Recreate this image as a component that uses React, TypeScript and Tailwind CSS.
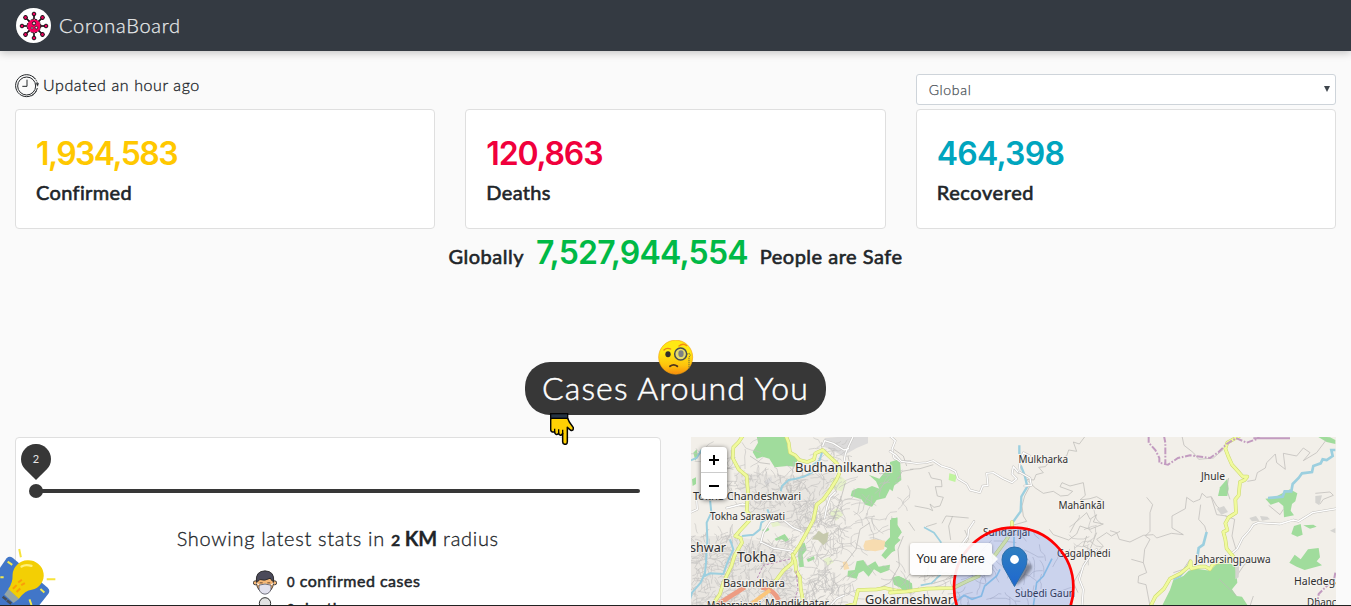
import React from "react";

const FONT = "font-[Lato,'Open_Sans',sans-serif]";

/* ---------- small drawings ---------- */

function Virus() {
  const arms = [0, 45, 90, 135, 180, 225, 270, 315];
  return (
    <svg viewBox="0 0 105 105" className="h-[35px] w-[35px]">
      <circle cx="52.5" cy="52.5" r="52.5" fill="#fff" />
      {arms.map((a) => (
        <g key={a} transform={`rotate(${a} 54 54)`}>
          <path d="M54 34V20" stroke="#1c1016" strokeWidth="5" />
          <circle cx="54" cy="18" r="5.5" fill="#f5005e" stroke="#1c1016" strokeWidth="3" />
        </g>
      ))}
      <circle cx="54" cy="54" r="20.5" fill="#f5005e" stroke="#1c1016" strokeWidth="3" strokeDasharray="7 4" />
      <circle cx="54" cy="46" r="5" fill="#ffd9e4" stroke="#1c1016" strokeWidth="3" />
      <circle cx="48" cy="60" r="3" fill="#fff" stroke="#1c1016" strokeWidth="2" />
      <circle cx="61" cy="59" r="4" fill="#ffd9e4" stroke="#1c1016" strokeWidth="2.5" />
    </svg>
  );
}

function Clock() {
  return (
    <svg viewBox="0 0 72 72" className="h-6 w-6" fill="none" stroke="#25282b">
      <path d="M61 15A33 33 0 1 0 67 42" strokeWidth="3" />
      <path d="M55 9A33 33 0 0 1 67 28M64 50A33 33 0 0 1 50 66" strokeWidth="3" strokeDasharray="4 2" />
      <circle cx="35" cy="36" r="27" strokeWidth="3" />
      <path d="M36 17V37H22" strokeWidth="3" />
      <path d="M63 28l8 0l-3 9z" fill="#25282b" strokeWidth="1" />
    </svg>
  );
}

function Monocle() {
  return (
    <svg viewBox="0 0 108 105" className="h-[35px] w-9">
      <defs>
        <linearGradient id="face" x1="0" y1="0" x2="0" y2="1">
          <stop offset="0.35" stopColor="#ffe913" />
          <stop offset="0.75" stopColor="#fdc20c" />
          <stop offset="1" stopColor="#f78c0e" />
        </linearGradient>
      </defs>
      <circle cx="53" cy="51.5" r="51" fill="url(#face)" stroke="#f5a30b" strokeWidth="2" />
      <path d="M18 30Q26 22 38 27" fill="none" stroke="#e8811c" strokeWidth="4" strokeLinecap="round" />
      <path d="M63 18Q75 8 86 17" fill="none" stroke="#f58a12" strokeWidth="4" strokeLinecap="round" />
      <ellipse cx="30" cy="43" rx="8" ry="9" fill="#31302b" />
      <circle cx="68" cy="42" r="18" fill="#e5dc6c" stroke="#474c50" strokeWidth="4.5" />
      <ellipse cx="69" cy="41" rx="8" ry="10" fill="#7d8184" />
      <path d="M86 43l8-3 3 6-4 5v35" fill="none" stroke="#6a6a42" strokeWidth="3" strokeDasharray="4 2" />
      <path d="M36 79Q47 70 58 79" fill="none" stroke="#50351c" strokeWidth="5.5" strokeLinecap="round" />
    </svg>
  );
}

function Hand() {
  return (
    <svg viewBox="0 0 72 96" className="h-8 w-6">
      <path
        d="M4 16H53L58 27L70 44Q70 56 61 51L52 43V86Q52 94 46 94Q38 94 38 86V61Q35 68 30 66Q26 65 26 60Q23 66 18 64Q14 62 14 57Q2 59 2 49V19Z"
        fill="#ffd104" stroke="#050505" strokeWidth="4.5" strokeLinejoin="round"
      />
      <path d="M14 47V58M26 49V61M38 50V64" stroke="#050505" strokeWidth="4" />
      <rect x="2" y="2" width="51" height="14" fill="#263443" stroke="#050505" strokeWidth="4" />
    </svg>
  );
}

function MaskFace() {
  return (
    <svg viewBox="0 0 72 74" className="h-[25px] w-6">
      <circle cx="7" cy="38" r="6" fill="#f6b877" stroke="#272525" strokeWidth="2.5" />
      <circle cx="65" cy="38" r="6" fill="#f6b877" stroke="#272525" strokeWidth="2.5" />
      <path d="M11 25H61V44Q58 62 36 70Q14 62 11 44Z" fill="#f6b877" stroke="#272525" strokeWidth="2.5" />
      <path d="M10 34Q7 3 36 2Q65 3 62 34L56 31L52 24Q35 34 20 28L16 33Z" fill="#4b4a5a" stroke="#272525" strokeWidth="2.5" />
      <path d="M20 38h9M43 38h9" stroke="#6e4c38" strokeWidth="3" />
      <path d="M10 39L19 45Q36 38 53 45L62 39" fill="none" stroke="#fff" strokeWidth="3" />
      <path d="M18 45Q36 38 54 45V57Q50 71 36 72Q22 71 18 57Z" fill="#e2e1ee" stroke="#343440" strokeWidth="2" />
    </svg>
  );
}

function Skull() {
  return (
    <svg viewBox="0 0 72 72" className="h-6 w-6">
      <circle cx="36" cy="19" r="17" fill="#e2e2e2" stroke="#303030" strokeWidth="3" />
    </svg>
  );
}

function Bulb() {
  return (
    <svg viewBox="0 350 170 175" className="h-[58px] w-[57px]">
      <path d="M-10 425L19 384Q27 376 38 383L142 472Q152 481 145 491L118 525H-10Z" fill="#4176c8" />
      <path d="M22 394L36 404M121 477L133 487M88 508L94 525M0 441H10" stroke="#f2e94e" strokeWidth="6" />
      <path d="M57 356L62 381M140 447H166" stroke="#f7e33a" strokeWidth="6" />
      <path d="M25 476L57 506L40 519L12 493Z" fill="#95a5a5" />
      <path d="M7 500L19 509M20 511L33 521" stroke="#444c59" strokeWidth="8" />
      <path d="M24 477Q38 458 37 433A47 45 0 1 1 95 479Q75 481 56 506Z" fill="#f3cf04" />
      <path d="M64 409Q76 401 94 407" fill="none" stroke="#fff07a" strokeWidth="7" strokeLinecap="round" />
      <path d="M38 476L49 465M49 486L60 475M54 457L65 449M63 465L74 459" stroke="#fb9d0a" strokeWidth="6" />
    </svg>
  );
}

/* ---------- map ---------- */

function rng(seed: number) {
  let s = seed;
  return () => {
    s = (s * 1664525 + 1013904223) % 4294967296;
    return s / 4294967296;
  };
}

type Area = [number, number, number, number, number, number];

function streets(seed: number, areas: Area[]) {
  const r = rng(seed);
  let d = "";
  for (const [x, y, w, h, n, len] of areas) {
    for (let i = 0; i < n; i++) {
      let px = x + r() * w;
      let py = y + r() * h;
      let a = -0.35 + Math.floor(r() * 4) * (Math.PI / 2) + (r() - 0.5) * 0.5;
      d += `M${px.toFixed(0)} ${py.toFixed(0)}`;
      for (let k = 0; k < 4; k++) {
        a += (r() - 0.5) * 1.1;
        px += Math.cos(a) * len * (0.4 + r());
        py += Math.sin(a) * len * (0.4 + r());
        d += `L${px.toFixed(0)} ${py.toFixed(0)}`;
      }
    }
  }
  return d;
}

const leftStreets = streets(11, [
  [125, 110, 190, 120, 110, 9],
  [300, 100, 140, 180, 100, 10],
  [0, 290, 130, 220, 150, 8],
  [110, 310, 190, 200, 220, 8],
  [300, 200, 160, 300, 140, 12],
  [440, 100, 200, 170, 26, 16],
  [460, 270, 130, 120, 16, 16],
  [340, 430, 160, 80, 50, 9],
  [20, 10, 170, 100, 16, 16],
  [380, 20, 80, 60, 20, 8],
]);
const midStreets = streets(5, [
  [10, 400, 200, 100, 26, 14],
  [220, 300, 300, 200, 44, 15],
  [530, 230, 110, 110, 12, 14],
]);

type Label = [string, number, number, number, number];

const labels: Label[] = [
  ["Budhanilkantha", 795, 472, 97, 13],
  ["Tokha Chandeshwari", 693, 500, 108, 11],
  ["Tokha Saraswati", 710, 519.5, 75, 10],
  ["shwar", 690, 551.5, 36, 13],
  ["Tokha", 737, 562, 39, 14],
  ["Basundhara", 723, 587, 62, 11],
  ["Mandikhatar", 765, 606.5, 64, 11],
  ["Maharajganj", 707, 609, 54, 10.5],
  ["Gokarneshwar", 865, 603.5, 88, 13],
  ["Mulkharka", 1018.5, 462.5, 49.5, 10.5],
  ["Mahānkāl", 1058.5, 508.5, 46, 10.5],
  ["Sundarijal", 983, 535.5, 47, 10.5],
  ["Gagalphedi", 1057, 556.5, 53.5, 10.5],
  ["Subedi Gaun", 1015, 596.5, 60, 10.5],
  ["Jhule", 1201, 479.5, 24, 10.5],
  ["Jaharsingpauwa", 1195, 562.5, 75.5, 10.5],
  ["Haledegaun", 1294, 584.5, 60, 10.5],
  ["Dhancha", 1307, 605.5, 41, 10.5],
];

function Road({ d, w = 8, c = "#f0fa9c", e = "#c9d66c" }: { d: string; w?: number; c?: string; e?: string }) {
  return (
    <g fill="none" strokeLinejoin="round" strokeLinecap="round">
      <path d={d} stroke={e} strokeWidth={w + 3} />
      <path d={d} stroke={c} strokeWidth={w} />
    </g>
  );
}

function MapDrawing() {
  const white = { c: "#ffffff", e: "#c2c0bd", w: 4 };
  return (
    <svg viewBox="691 437 645 169" className="block h-[169px] w-[645px]">
      <rect x="691" y="437" width="645" height="169" fill="#f2efe9" />

      <g transform="translate(690 436) scale(.33333)">
        <path d="M0 300H130L290 330L330 510H0ZM130 110L310 120L440 110L340 290L180 240Z" fill="#e9e6e1" />
        <g fill="#a0dc9c">
          <path d="M200 0H288L294 42L324 70L314 92L292 90L254 94L238 68L218 62L200 68L188 48L204 20Z" />
          <path d="M630 68L634 132L600 158L586 186L560 192L546 212L526 206L514 190L482 180L486 164L504 156L528 158L546 150L568 158L558 136L536 116L568 128L584 108L612 104Z" />
          <path d="M604 246L622 246V278L636 288L618 314L612 342L586 370L574 358L592 336L576 328L600 304Z" />
          <path d="M328 324L344 320L350 342L338 356L342 392L328 394L324 360Z" />
          <path d="M500 376L520 372L532 390L556 376L566 392L600 386L598 402L572 412L552 400L536 422L520 404L506 412L500 428L472 422L474 404L494 402Z" />
          <path d="M606 426L626 420L660 436V466L634 456L612 446Z" />
          <path d="M216 282l18-8 4 8-16 8zM254 308l30-14 14 18-12 6-10-8-18 4zM350 370l22-10 2 10-20 8zM10 50l10-10 4 20-8 14zM6 130l12-6v20l-10 6z" />
        </g>
        <path d="M404 6L480 0H534V22L500 36L458 60L430 44L402 32ZM222 138L244 120L246 132L230 150Z" fill="#dcdbdb" />
        <path d="M420 130l30-12 20 18-14 30-26-6zM416 230l26-14 18 20-22 18zM240 256l22-4 10 16-24 6zM400 370l18-8 14 16-20 12z" fill="#e6f1cb" />
        <path d={leftStreets} fill="none" stroke="#c3c1bf" strokeWidth="1.8" />
        <path d="M526 314L550 310L586 314L582 340L556 346L524 342L520 330ZM458 378L470 376L478 398L462 402Z" fill="#f7dcb0" />
        <path d="M386 284L400 294L416 288L412 316L400 328L384 312L366 310Z" fill="#c6c9ad" />
        <path
          d="M590 80L586 110L570 114L548 90L510 104L480 88L474 60M540 260L510 280L498 340L452 400M640 300L624 340L628 390L600 440L560 460M650 90L640 60L612 40M466 140L452 190L430 250M60 120L90 90L130 100M180 60L210 80L240 84"
          fill="none" stroke="#b5b3b1" strokeWidth="2"
        />
        <g fill="none" stroke="#9ccfdf" strokeWidth="6">
          <path d="M396 50L388 74L370 86L366 110L342 122L318 128L296 132L276 150L272 166" />
          <path d="M60 190L64 230L50 260L52 310L48 380L44 420L60 412L100 414L112 380L130 340L120 310" />
          <path d="M156 300L190 296L210 280L214 260L240 240L232 220" />
          <path d="M0 74L20 66L36 40M44 412L32 440L6 470L0 490" />
        </g>
        <Road d="M490 0L476 30L466 54L462 76M398 30L404 14L430 22L462 42L476 38" {...white} />
        <Road d="M600 0L616 14L606 40L612 66L632 78L660 76M436 168L420 184L410 214L404 246M110 216L158 204L174 208" {...white} />
        <Road d="M212 320L220 290L240 258L278 250L308 274L336 286M212 318L250 336L310 346M0 230L22 220L20 190M420 510L440 488L462 478" {...white} />
        <Road d="M158 0L146 18L130 34L128 66L146 100L170 120L174 170L170 226L184 240L176 256L148 286L136 300L152 306L156 320L134 358L124 390L100 440L90 474L72 500" />
        <Road d="M288 0L296 20L300 50L316 58L328 72L352 78L372 70L376 52L398 42L412 56L432 74L442 84L448 112L440 130L420 162L400 190L380 206L370 252L352 286L330 326L310 356L308 380L280 404L262 428L234 462" />
        <Road d="M308 356L316 376L318 404L330 424L332 456L338 490V510" />
        <Road d="M470 510L494 504L504 462L560 460L584 456L620 464L660 466" />
        <path d="M60 520L164 454M214 454Q250 460 266 492" fill="none" stroke="#ed9c83" strokeWidth="14" />
        <path d="M176 510L240 462" fill="none" stroke="#fac67c" strokeWidth="12" />
        <path d="M202 426L220 388L304 368M318 404L324 460L312 500" fill="none" stroke="#b98cb4" strokeWidth="3" strokeDasharray="8 5" />
      </g>

      <g transform="translate(890 436) scale(.33333)">
        <path d="M0 78L20 72L30 82L28 112L16 134L8 166L0 160ZM0 252L22 244V266L34 286L16 300L32 312L12 330L16 344L0 350ZM8 424L26 420L66 442L68 464L40 466Z" fill="#a0dc9c" />
        <path d="M178 112L200 118L196 138L176 132Z" fill="#c0f49e" />
        <path d={midStreets} fill="none" stroke="#c0bebc" strokeWidth="1.8" />
        <g fill="none" stroke="#bcbab7" strokeWidth="2.2">
          <path d="M586 0L568 24L550 18L560 46L536 42L530 60L480 74L466 92L446 94L460 110L438 116L432 132L410 130L436 156L460 172L490 166L512 180L534 178L548 166L510 152L516 140L540 150L580 140L586 178L570 192L600 188L620 182L640 194" />
          <path d="M116 108L124 126L154 132L156 152L136 152L142 180L160 184L150 210L132 214L120 204L128 224L116 218L74 210M60 100L90 98L130 86M22 134L36 106L70 100M420 150L404 180L396 210L400 240L410 256L360 270L350 300" />
          <path d="M56 258L74 284M108 272L140 262M156 262L168 240L236 246M188 240L176 270L182 312M224 282L236 310L220 332M112 420L120 360L96 344M124 444L190 424" />
          <path d="M540 290L556 260L590 230L600 250L620 236L610 258L640 264L600 280L570 270L560 294L536 312L490 296L478 280M690 286L664 300L650 290L620 310L640 330L620 350L580 330L590 300M620 290L580 390L550 440L564 470" />
        </g>
        <g fill="none" stroke="#9ccfdf" strokeWidth="7">
          <path d="M388 28V54M392 88L404 118L412 152L394 182L392 226L366 262" />
          <path d="M102 274L132 290L154 320M92 448L124 442L152 416M180 510L222 478L246 490L274 480L284 450L320 420L330 400M430 510L440 440L460 420L486 368M372 300V350" strokeWidth="5" />
        </g>
        <Road d="M0 46L18 58L34 76L80 82L110 80L130 74L154 90L180 98L196 106L204 128L230 144L240 162L270 170L278 150L294 148L290 112L310 110L340 128L366 140L380 128L366 114L370 92L386 110L390 80L400 50L420 60" {...white} />
        <Road d="M388 108L420 126L424 148L404 150M252 256L236 280L234 300L212 330M620 340L600 360L580 390L568 430L580 460L576 510" {...white} />
        <Road d="M0 470L50 466L110 458L190 456L230 436L266 420M310 364L350 310L366 284V258" w={8} />
      </g>

      <g transform="translate(1110 436) scale(.33333)">
        <g fill="#a0dc9c">
          <path d="M236 404L260 398L300 404L324 380H356L376 390L382 440L366 460L380 480L396 482L414 510H156L180 462L190 432L220 420Z" />
          <path d="M352 128L356 158L352 180H324L330 154Z" />
          <path d="M490 186L540 160L562 172L556 196L546 204L542 224L552 238L522 244L520 210L506 198L482 206L466 188Z" />
          <path d="M552 270L572 264L578 296L562 302L544 294ZM580 268L610 266L620 272L600 278ZM594 340L626 336L630 364L620 376L636 388L584 402L560 392L538 380L554 356L572 370ZM620 0L660 4L676 12V24L650 18Z" />
        </g>
        <g fill="none" stroke="#bdbbb8" strokeWidth="2.2">
          <path d="M110 184L128 206L120 230V286L106 300L120 310L104 340L100 380L110 410L86 420L84 440L108 446L120 510M0 284L20 290L28 310L60 318L100 298L130 296L140 306L184 292L220 296L186 276L186 240L226 218L230 184L250 198L270 190L276 172L290 184L304 182L320 210L344 230M304 184L320 236L350 240M272 206L266 250L284 270L290 290M356 126L350 160L360 190M346 240L374 250L366 300L378 340" />
          <path d="M412 136L436 132L442 110L466 96L470 80L496 54L500 80L526 100L520 52L560 60L580 36L600 50L580 74L620 50L650 10M476 208L510 236L520 220M216 0L222 28L250 50L266 70L310 66L340 40M240 370L220 400L190 410M100 380L64 370M420 370L400 390L380 420M328 430L380 480M430 480L420 510M616 172L660 168L670 178L640 190L630 204" />
        </g>
        <path d="M418 246l20-6 10 14-22 2zM450 240l22 2 8 8-24 4zM616 180l20-2-8 30-12-8zM320 218l22-8 12 18-20 8zM660 284l16-8v16zM376 384l12-4-2 44-10 6z" fill="#d5d4d1" />
        <path d="M676 42H664L668 60L650 72L638 70L632 82L610 90L606 108L576 112L566 126L548 144L544 166L524 166L518 182L474 186M290 288L280 326L266 336L262 366M236 388L210 420L190 430" fill="none" stroke="#9ccfdf" strokeWidth="8" />
        <Road d="M366 352L382 338L398 306L418 284L430 266L444 260L510 264L550 252L566 256L608 230L680 218" {...white} />
        <Road d="M388 0L352 20L346 38L356 64L366 86L384 106L398 122H412L404 132L390 138L386 178L376 190L378 230L356 244L346 262L352 282L340 288L346 310L350 338L370 362L360 374L320 380L308 386L300 400L286 392L270 392L244 398L242 376L236 392L212 412L180 428L162 458L136 482L122 510" />
        <path d="M116 0V20L136 42L148 66V80L174 86L204 66L240 58L300 66L326 48L350 24L378 6L410 20L438 10L450 0M162 0L166 20V84M676 410L672 432L646 454L626 474L620 510" fill="none" stroke="#c29bc0" strokeWidth="6" strokeDasharray="20 5 5 5" />
        <path d="M430 7H540" stroke="#c29bc0" strokeWidth="6" />
      </g>

      <g className="font-['Noto_Sans',sans-serif]" fill="#303030" stroke="#f7f5f1" strokeWidth="2.2" strokeOpacity=".8" style={{ paintOrder: "stroke" }}>
        {labels.map(([t, x, y, w, s]) => (
          <text key={t} x={x} y={y} fontSize={s} textLength={w} lengthAdjust="spacingAndGlyphs">
            {t}
          </text>
        ))}
      </g>

      <circle cx="1013.7" cy="587.3" r="59.7" fill="#3364ff" fillOpacity=".2" stroke="#ff0000" strokeWidth="2.7" />

      <defs>
        <linearGradient id="pin" x1="0" y1="0" x2="0" y2="1">
          <stop offset="0" stopColor="#2f7fc0" />
          <stop offset="1" stopColor="#1e67cf" />
        </linearGradient>
        <filter id="soft"><feGaussianBlur stdDeviation="1.5" /></filter>
      </defs>
      <path d="M1015 585L1022 568Q1028 560 1032 566Q1031 573 1018 584Z" fill="#000" opacity=".38" filter="url(#soft)" />
      <path d="M1014.5 586.5L1004 568Q1002 564 1002 559.5A12.5 12.5 0 0 1 1027 559.5Q1027 564 1025 568Z" fill="url(#pin)" stroke="#2a6ca9" strokeWidth="1" />
      <circle cx="1014.5" cy="559.5" r="4.4" fill="#fff" />
    </svg>
  );
}

/* ---------- page ---------- */

const stats = [
  { value: "1,934,583", label: "Confirmed", color: "text-[#ffc800]", num: "tracking-[-1.6px]", lab: "tracking-[0.35px]" },
  { value: "120,863", label: "Deaths", color: "text-[#f0003c]", num: "tracking-[-1.2px]", lab: "tracking-[0.35px]" },
  { value: "464,398", label: "Recovered", color: "text-[#00a5be]", num: "tracking-[-0.75px]", lab: "tracking-[0.6px]" },
];

function StatCard({ value, label, color, num, lab }: (typeof stats)[number]) {
  return (
    <div className="h-[120px] rounded border border-[#dfdfdf] bg-white px-5 pt-[25px]">
      <div className={`font-[Inter,sans-serif] text-[32px] leading-[38px] font-semibold ${color}`}>
        <span className={num}>{value}</span>
      </div>
      <div className="mt-[7px] text-xl leading-6 [-webkit-text-stroke:0.6px_currentColor]">
        <span className={lab}>{label}</span>
      </div>
    </div>
  );
}

export default function App() {
  return (
    <div className={`relative h-[606px] w-full overflow-hidden bg-[#fafafa] text-[#212529] ${FONT}`}>
      <header className="flex h-[51px] items-center bg-[#343a42] pl-4 text-[#e9ebec] shadow-[0_2px_8px_rgba(0,0,0,0.22)]">
        <Virus />
        <span className="mb-0.5 ml-2 text-xl leading-6 font-light tracking-[0.75px] [-webkit-text-stroke:0.25px_currentColor]">CoronaBoard</span>
      </header>

      <main className="px-[15px] pt-[23px]">
        <div className="grid grid-cols-3 gap-x-[30px]">
          <div className="col-span-2 flex h-6 items-center gap-1">
            <Clock />
            <span className="mb-0.5 text-base leading-6 font-light tracking-[0.6px] [-webkit-text-stroke:0.3px_currentColor]">Updated an hour ago</span>
          </div>
          <div className="flex h-[31px] items-center justify-between rounded-[3px] border border-[#ced4da] bg-white pr-[5px] pl-3 text-sm text-[#495057]">
            <span className="font-light tracking-[0.7px] [-webkit-text-stroke:0.25px_currentColor]">Global</span>
            <svg viewBox="0 0 6 6" className="mb-0.5 h-1.5 w-1.5"><path d="M0 0H6L3 6Z" fill="#3f464d" /></svg>
          </div>
        </div>

        <div className="mt-1 grid grid-cols-3 gap-x-[30px]">
          {stats.map((s) => <StatCard key={s.label} {...s} />)}
        </div>

        <div className="mt-[5px] flex h-[38px] items-baseline justify-center text-xl whitespace-pre">
          <span className="tracking-[0.5px] [-webkit-text-stroke:0.6px_currentColor]">Globally</span>
          <span className="mx-3 font-[Inter,sans-serif] text-[32px] leading-[38px] font-semibold tracking-[-0.8px] text-[#00b946]">7,527,944,554</span>
          <span className="tracking-[0.5px] [-webkit-text-stroke:0.6px_currentColor]">People are Safe</span>
        </div>

        <div className="mt-[90px] flex justify-center">
          <div className="relative flex h-[53px] w-[301px] items-center justify-center rounded-[25px] bg-[#373737] pb-0.5 text-[32px] leading-none font-light text-white">
            <span className="tracking-[1.1px] whitespace-nowrap [-webkit-text-stroke:0.5px_currentColor]">Cases Around You</span>
            <div className="absolute -top-[22px] left-[133px]"><Monocle /></div>
            <div className="absolute top-[51px] left-[25px]"><Hand /></div>
          </div>
        </div>

        <div className="mt-[22px] grid grid-cols-2 gap-x-[30px]">
          <section className="h-[300px] rounded border border-[#dfdfdf] bg-white px-[5px] pt-1.5">
            <div className="relative flex h-[46px] w-[30px] justify-center">
              <svg viewBox="0 0 30 36" className="h-9 w-[30px]">
                <path d="M15 36L4.4 25.6A15 15 0 1 1 25.6 25.6Z" fill="#373737" />
              </svg>
              <span className="absolute top-[9px] text-[11px] leading-3 text-[#e8e8e8]">2</span>
            </div>
            <div className="-mt-1.5 flex h-3.5 items-center pr-[15px] pl-2">
              <div className="h-3.5 w-3.5 rounded-full bg-[#373737]" />
              <div className="-ml-1 h-1 flex-1 rounded-full bg-[#373737]" />
            </div>
            <div className="mt-7 text-center text-xl leading-6">
              <span className="font-light tracking-[0.7px] [-webkit-text-stroke:0.3px_currentColor]">
                Showing latest stats in <b className="font-bold tracking-[-0.2px]"><span className="text-[16px]">2</span> KM</b> radius
              </span>
            </div>
            <div className="mt-[18px] flex flex-col gap-0.5 pl-[232px] text-base leading-6 [-webkit-text-stroke:0.5px_currentColor]">
              <div className="flex h-[25px] items-start gap-2.5">
                <MaskFace />
                <span className="-mt-px tracking-[0.5px]"><span className="text-[13px]">0</span> confirmed cases</span>
              </div>
              <div className="flex h-6 items-start gap-2.5">
                <Skull />
                <span className="-mt-px tracking-[0.5px]"><span className="text-[13px]">0</span> deaths</span>
              </div>
            </div>
          </section>

          <section className="relative h-[169px] overflow-hidden">
            <MapDrawing />
            <div className="absolute top-2.5 left-2.5 flex w-[26px] flex-col rounded bg-white shadow-[0_1px_5px_rgba(0,0,0,0.6)]">
              <div className="flex h-[26px] items-center justify-center border-b border-[#ccc]">
                <svg viewBox="0 0 10 10" className="h-2.5 w-2.5"><path d="M5 0V10M0 5H10" stroke="#000" strokeWidth="2" /></svg>
              </div>
              <div className="flex h-[26px] items-center justify-center">
                <svg viewBox="0 0 10 10" className="h-2.5 w-2.5"><path d="M0 5H10" stroke="#000" strokeWidth="2" /></svg>
              </div>
            </div>
            <div className="absolute top-[106px] left-[219px] flex h-8 w-[82px] items-center justify-center rounded-[3px] bg-white/90 font-['Liberation_Sans',sans-serif] text-xs text-[#222] shadow-[0_1px_3px_rgba(0,0,0,0.4)]">
              You are here
              <svg viewBox="0 0 6 12" className="absolute top-2.5 -right-1.5 h-3 w-1.5"><path d="M0 0L6 6L0 12Z" fill="#fff" fillOpacity=".9" /></svg>
            </div>
          </section>
        </div>
      </main>

      <div className="absolute bottom-[1px] left-0"><Bulb /></div>
      <div className="absolute bottom-0 left-0 h-px w-full bg-[#222]" />
    </div>
  );
}
